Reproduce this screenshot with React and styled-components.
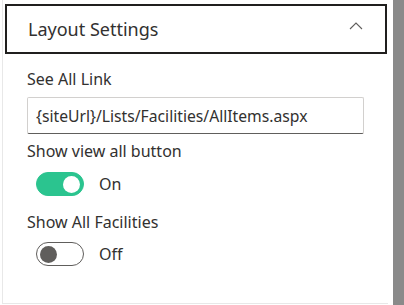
import React, { useState } from 'react'
import styled, { createGlobalStyle } from 'styled-components'

const Global = createGlobalStyle`
    html, body {
        margin: 0;
        padding: 0;
        background: #fff;
    }
    body {
        font-family: 'Segoe UI', 'Noto Sans', 'Open Sans', sans-serif;
        color: #323130;
        overflow: hidden;
    }
`

const Frame = styled.div`
    width: 404px;
    height: 305px;
    display: flex;
    align-items: stretch;
`

const Pane = styled.div`
    width: 386px;
    margin: 0 0 1px 2px;
    border-left: 1px solid #e8e8e8;
    border-bottom: 1px solid #e8e8e8;
    box-sizing: border-box;
    padding: 4px 0 0 2px;
    background: #fff;
`

const Scrollbar = styled.div`
    width: 11px;
    margin-left: 5px;
    background: #8a8a8a;
`

const Header = styled.button`
    all: unset;
    box-sizing: border-box;
    width: 382px;
    height: 50px;
    border: 2px solid #201f1e;
    display: flex;
    align-items: center;
    justify-content: space-between;
    padding: 0 22px 0 21px;
    font-size: 18px;
    color: #323130;
    cursor: pointer;

    svg {
        margin-bottom: 7px;
    }
`

const Chevron = () => (
    <svg width="14" height="8" viewBox="0 0 14 8" fill="none">
        <path d="M1 7 L7 1 L13 7" stroke="#605e5c" strokeWidth="1.1" />
    </svg>
)

const Body = styled.div`
    padding: 15px 0 0 22px;
    display: flex;
    flex-direction: column;
`

const Label = styled.div`
    font-size: 16px;
    line-height: 20px;
    margin-bottom: ${p => p.gap || 8}px;
`

const Input = styled.input`
    box-sizing: border-box;
    width: 337px;
    height: 37px;
    border: 1px solid #d2d0ce;
    border-bottom: 1px solid #605e5c;
    border-radius: 2px;
    padding: 0 8px;
    font-family: inherit;
    font-size: 15.7px;
    color: #323130;
    margin-bottom: 7px;
    outline: none;
`

const ToggleRow = styled.div`
    display: flex;
    align-items: center;
    gap: 15px;
    padding-left: 9px;
    margin-bottom: ${p => p.gap || 0}px;
`

const Track = styled.span`
    box-sizing: border-box;
    width: 48px;
    height: 24px;
    border-radius: 12px;
    display: flex;
    align-items: center;
    padding: 0 3px;
    justify-content: ${p => (p.on ? 'flex-end' : 'flex-start')};
    background: ${p => (p.on ? '#2bc48f' : '#fff')};
    border: 1px solid ${p => (p.on ? '#2bc48f' : '#605e5c')};
    cursor: pointer;
`

const Knob = styled.span`
    width: 17px;
    height: 17px;
    border-radius: 50%;
    background: ${p => (p.on ? '#fff' : '#605e5c')};
`

const State = styled.span`
    font-size: 16px;
`

const Toggle = ({ on, onChange }) => (
    <Track on={on ? 1 : 0} onClick={() => onChange(!on)}>
        <Knob on={on ? 1 : 0} />
    </Track>
)

export default function App() {
    const [viewAll, setViewAll] = useState(true)
    const [showAll, setShowAll] = useState(false)
    return (
        <Frame>
            <Global />
            <Pane>
                <Header>
                    Layout Settings
                    <Chevron />
                </Header>
                <Body>
                    <Label gap={8}>See All Link</Label>
                    <Input defaultValue="{siteUrl}/Lists/Facilities/AllItems.aspx" />
                    <Label gap={11}>Show view all button</Label>
                    <ToggleRow gap={16}>
                        <Toggle on={viewAll} onChange={setViewAll} />
                        <State>{viewAll ? 'On' : 'Off'}</State>
                    </ToggleRow>
                    <Label gap={10}>Show All Facilities</Label>
                    <ToggleRow>
                        <Toggle on={showAll} onChange={setShowAll} />
                        <State>{showAll ? 'On' : 'Off'}</State>
                    </ToggleRow>
                </Body>
            </Pane>
            <Scrollbar />
        </Frame>
    )
}
